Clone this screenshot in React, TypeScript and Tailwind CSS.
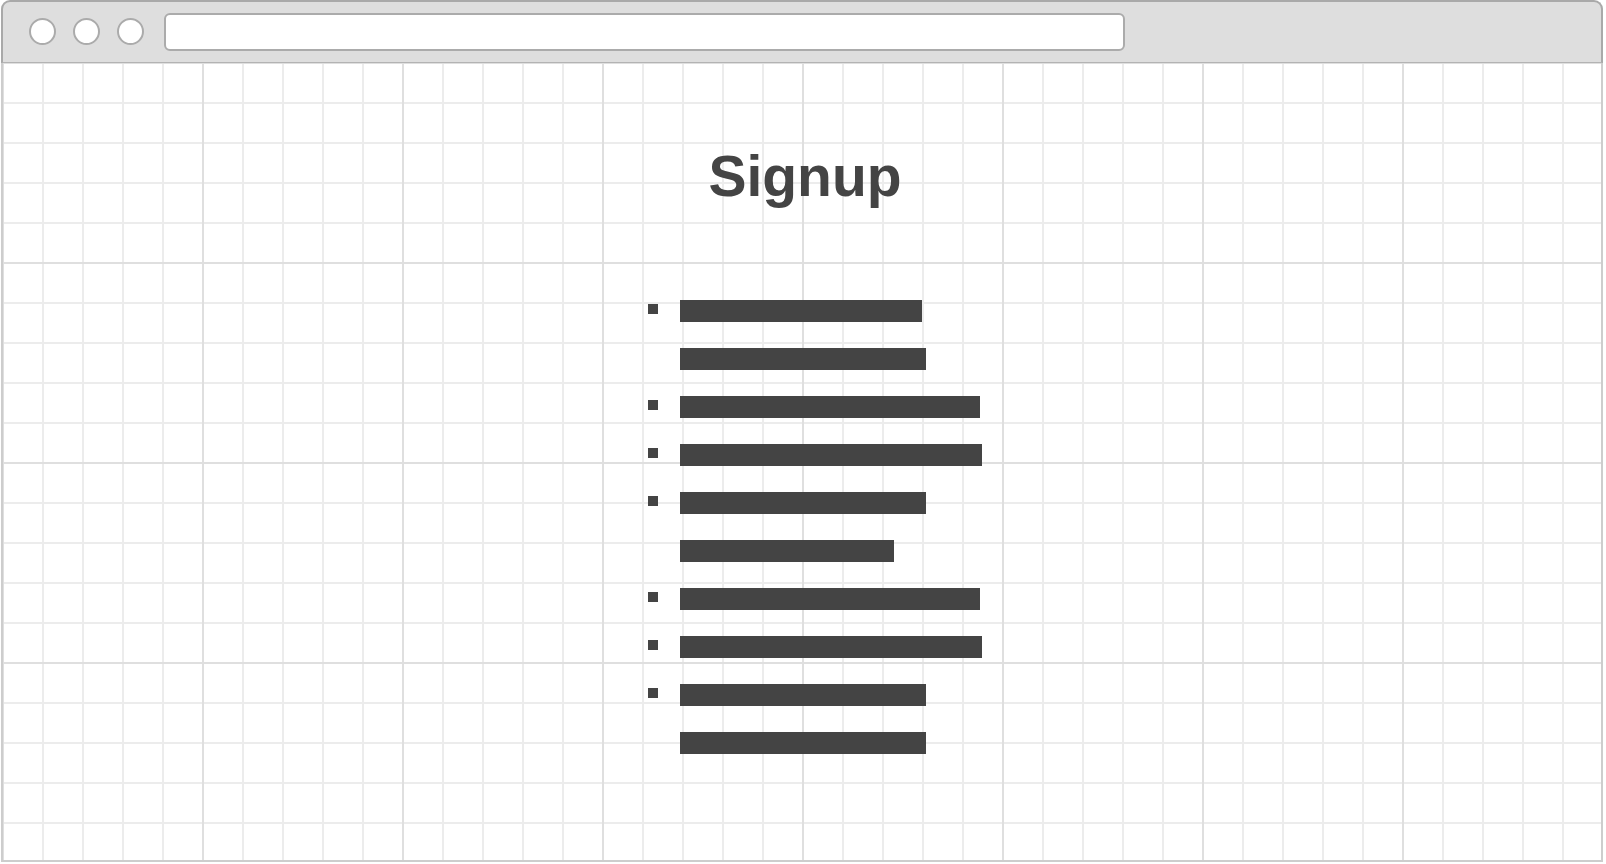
import React from "react";

const rows: { w: number; bullet: boolean }[] = [
  { w: 242, bullet: true },
  { w: 246, bullet: false },
  { w: 300, bullet: true },
  { w: 302, bullet: true },
  { w: 246, bullet: true },
  { w: 214, bullet: false },
  { w: 300, bullet: true },
  { w: 302, bullet: true },
  { w: 246, bullet: true },
  { w: 246, bullet: false },
];

export default function App() {
  return (
    <div className="w-[1606px] h-[864px] bg-white overflow-hidden" style={{ fontFamily: '"Liberation Sans", Arial, sans-serif' }}>
      <div className="ml-px w-[1602px] h-[862px] flex flex-col">
        <div className="h-[63px] shrink-0 flex items-center bg-[#dedede] border-2 border-b border-[#a9a9a9] border-b-[#b3b3b3] rounded-t-[9px] pl-[26px]">
          <div className="flex gap-[17px] -mt-[1px]">
            <div className="w-[27px] h-[27px] rounded-full bg-white border-2 border-[#ababab]" />
            <div className="w-[27px] h-[27px] rounded-full bg-white border-2 border-[#ababab]" />
            <div className="w-[27px] h-[27px] rounded-full bg-white border-2 border-[#ababab]" />
          </div>
          <div className="ml-[20px] w-[961px] h-[38px] -mt-[1px] bg-white border-2 border-[#ababab] rounded-[6px]" />
        </div>
        <div className="flex-1 flex flex-col border-2 border-t-0 border-[#cdcdcd] bg-white bg-[linear-gradient(to_right,#dfdfdf_2px,transparent_2px),linear-gradient(to_bottom,#dfdfdf_2px,transparent_2px),linear-gradient(to_right,#ececec_2px,transparent_2px),linear-gradient(to_bottom,#ececec_2px,transparent_2px)] bg-[size:200px_200px,200px_200px,40px_40px,40px_40px] bg-[position:199px_199px,199px_199px,39px_39px,39px_39px]">
          <h1 className="mt-[85px] pl-[6px] text-center text-[57px] leading-[57px] font-bold text-[#444444]">Signup</h1>
          <div className="mt-[95px] pl-[645px] flex flex-col gap-[26px]">
            {rows.map((r, i) => (
              <div key={i} className="flex items-start h-[22px]">
                <div className={r.bullet ? "w-[10px] h-[10px] mt-[4px] bg-[#444444]" : "w-[10px] h-[10px]"} />
                <div className="ml-[22px] h-[22px] bg-[#444444]" style={{ width: r.w }} />
              </div>
            ))}
          </div>
        </div>
      </div>
    </div>
  );
}
